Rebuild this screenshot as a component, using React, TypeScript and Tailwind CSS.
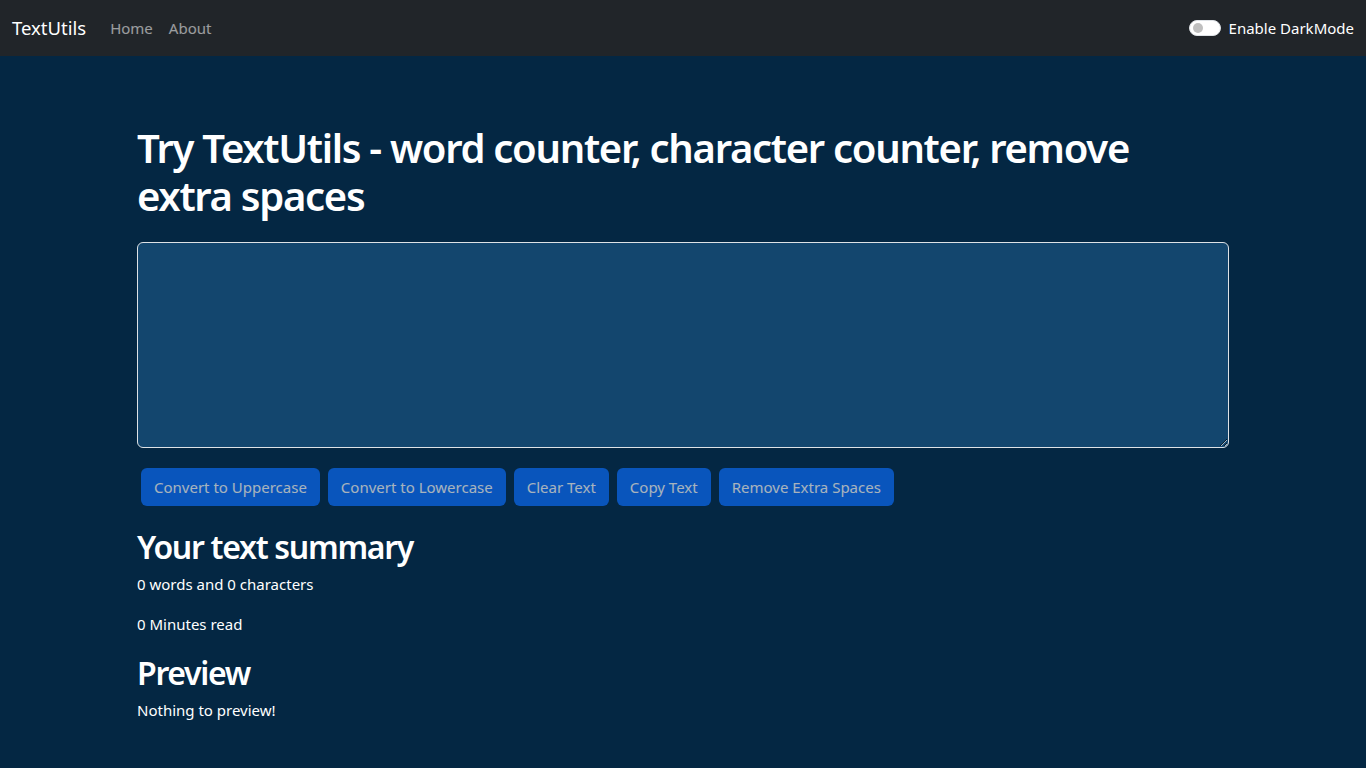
import * as React from 'react'

const font = { fontFamily: '"Noto Sans", "Open Sans", sans-serif' }

function Navbar() {
  return (
    <nav className="flex h-14 items-center justify-between bg-[#212529] px-3">
      <div className="flex items-center">
        <a className="mr-4 text-[18.5px] text-white">TextUtils</a>
        <ul className="flex">
          <li>
            <a className="px-2 text-[15px] text-white/55">Home</a>
          </li>
          <li>
            <a className="px-2 text-[15px] text-white/55">About</a>
          </li>
        </ul>
      </div>
      <div className="flex items-center">
        <span className="relative mr-2 inline-block h-4 w-8 rounded-full border border-[#dee2e6] bg-white">
          <span className="absolute left-[3px] top-[2px] h-[10px] w-[10px] rounded-full bg-[#bfbfbf]" />
        </span>
        <span className="text-[15px] text-white">Enable DarkMode</span>
      </div>
    </nav>
  )
}

const buttons = [
  'Convert to Uppercase',
  'Convert to Lowercase',
  'Clear Text',
  'Copy Text',
  'Remove Extra Spaces',
]

export default function App() {
  const [text, setText] = React.useState('')

  return (
    <div className="min-h-[768px] bg-[#042743]" style={font}>
      <Navbar />
      <div className="mx-auto w-[1140px] px-3">
        <div className="px-3 pt-[68px] text-white">
          <h1 className="mb-[22px] text-[40px] font-semibold leading-[48px] tracking-[-1.3px]">
            Try TextUtils - word counter, character counter, remove extra spaces
          </h1>
          <textarea
            className="block h-[206px] w-full rounded-md border border-[#dee2e6] bg-[#13466e] px-3 py-1.5 text-base text-white outline-none"
            value={text}
            onChange={(e) => setText(e.target.value)}
          />
          <div className="mt-5 flex">
            {buttons.map((b) => (
              <button
                key={b}
                disabled
                className="mx-1 h-[38px] rounded-md bg-[#0d6efd] px-[13px] text-[15px] text-white opacity-65"
              >
                {b}
              </button>
            ))}
          </div>
          <div className="mt-[22px]">
            <h2 className="mb-1.5 text-[32px] font-semibold leading-[38px] tracking-[-1.3px]">Your text summary</h2>
            <p className="mb-4 text-[15px] leading-6">0 words and 0 characters</p>
            <p className="mb-[18px] text-[15px] leading-6">0 Minutes read</p>
            <h2 className="mb-1.5 text-[32px] font-semibold leading-[38px] tracking-[-1.3px]">Preview</h2>
            <p className="text-[15px] leading-6">Nothing to preview!</p>
          </div>
        </div>
      </div>
    </div>
  )
}
